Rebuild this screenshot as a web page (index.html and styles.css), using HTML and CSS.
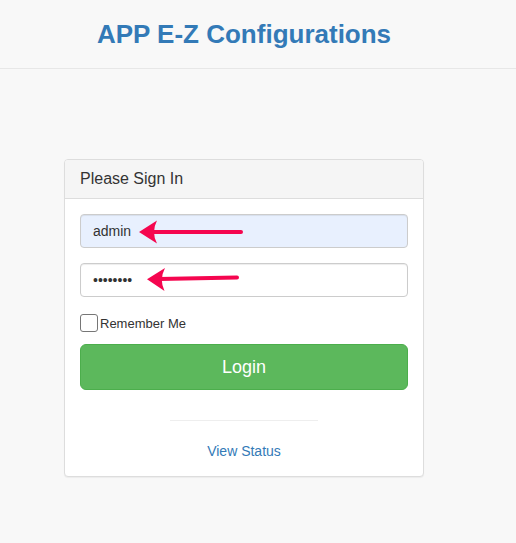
FILE: index.html
```html
<!DOCTYPE html>
<html lang="en">
<head>
<meta charset="utf-8">
<title>APP E-Z Configurations</title>
<link rel="stylesheet" href="styles.css">
</head>
<body>
<header class="topbar">
  <div class="column">
    <h1 class="brand">APP E-Z Configurations</h1>
  </div>
</header>
<main class="column main">
  <section class="panel">
    <div class="panel-heading">Please Sign In</div>
    <form class="panel-body">
      <div class="form-group">
        <input class="form-control autofill" type="text" value="admin">
      </div>
      <div class="form-group">
        <input class="form-control" type="password" value="12345678">
      </div>
      <label class="check-row"><input class="check" type="checkbox">Remember Me</label>
      <button class="btn-login" type="button">Login</button>
      <hr class="divider">
      <div class="status-row"><a class="status-link" href="#">View Status</a></div>
    </form>
  </section>
</main>
<svg class="annotations" width="516" height="543" viewBox="0 0 516 543" aria-hidden="true">
  <line x1="241" y1="232" x2="152" y2="232" stroke="#f5064f" stroke-width="4" stroke-linecap="round"/>
  <path d="M139 232 L157 220.5 Q151 232 157 243.5 Z" fill="#f5064f"/>
  <line x1="237" y1="277.5" x2="159" y2="279" stroke="#f5064f" stroke-width="4" stroke-linecap="round"/>
  <path d="M147 279.2 L165 268 Q159 279.5 164.5 291 Z" fill="#f5064f"/>
</svg>
</body>
</html>
```
FILE: styles.css
```css
html, body {
  margin: 0;
  padding: 0;
}
body {
  background: #f8f8f8;
  font-family: "Liberation Sans", Arial, sans-serif;
  color: #333;
  font-size: 14px;
  line-height: 20px;
  position: relative;
  height: 543px;
  overflow: hidden;
}
.column {
  width: 360px;
  margin-left: 64px;
}
.topbar {
  border-bottom: 1px solid #e7e7e7;
  padding: 20px 0 19px;
  height: 29px;
}
.brand {
  margin: 0;
  text-align: center;
  white-space: nowrap;
  font-size: 26px;
  line-height: 29px;
  font-weight: bold;
  color: #337ab7;
}
.main {
  padding-top: 90px;
}
.panel {
  background: #fff;
  border: 1px solid #ddd;
  border-radius: 4px;
  box-shadow: 0 1px 1px rgba(0,0,0,.05);
}
.panel-heading {
  background: #f5f5f5;
  border-bottom: 1px solid #ddd;
  border-radius: 3px 3px 0 0;
  padding: 10px 15px;
  font-size: 16px;
  line-height: 18px;
  color: #333;
}
.panel-body {
  padding: 15px;
  display: flex;
  flex-direction: column;
  margin: 0;
}
.form-group {
  margin-bottom: 15px;
}
.form-control {
  display: block;
  box-sizing: border-box;
  width: 100%;
  height: 34px;
  padding: 6px 12px;
  margin: 0;
  border: 1px solid #ccc;
  border-radius: 4px;
  background: #fff;
  font-family: "Liberation Sans", Arial, sans-serif;
  font-size: 14px;
  color: #333;
  box-shadow: inset 0 1px 1px rgba(0,0,0,.075);
  outline: none;
}
.form-control.autofill {
  background: #e8f0fe;
}
.check-row {
  display: flex;
  align-items: flex-end;
  height: 20px;
  font-size: 13px;
  line-height: 16px;
  color: #333;
}
.check {
  appearance: none;
  -webkit-appearance: none;
  box-sizing: border-box;
  width: 18px;
  height: 18px;
  margin: 0 2px 0 0;
  border: 1px solid #767676;
  border-radius: 3px;
  background: #fff;
}
.btn-login {
  margin-top: 12px;
  height: 46px;
  width: 100%;
  border: 1px solid #4cae4c;
  border-radius: 6px;
  background: #5cb85c;
  color: #fff;
  font-family: "Liberation Sans", Arial, sans-serif;
  font-size: 18px;
  line-height: 24px;
  padding: 10px 16px;
}
.divider {
  width: 45%;
  margin: 30px auto 20px;
  border: 0;
  border-top: 1px solid #eee;
  height: 0;
}
.status-row {
  text-align: center;
}
.status-link {
  color: #337ab7;
  text-decoration: none;
  font-size: 14px;
}
.annotations {
  position: absolute;
  left: 0;
  top: 0;
  pointer-events: none;
}
```
